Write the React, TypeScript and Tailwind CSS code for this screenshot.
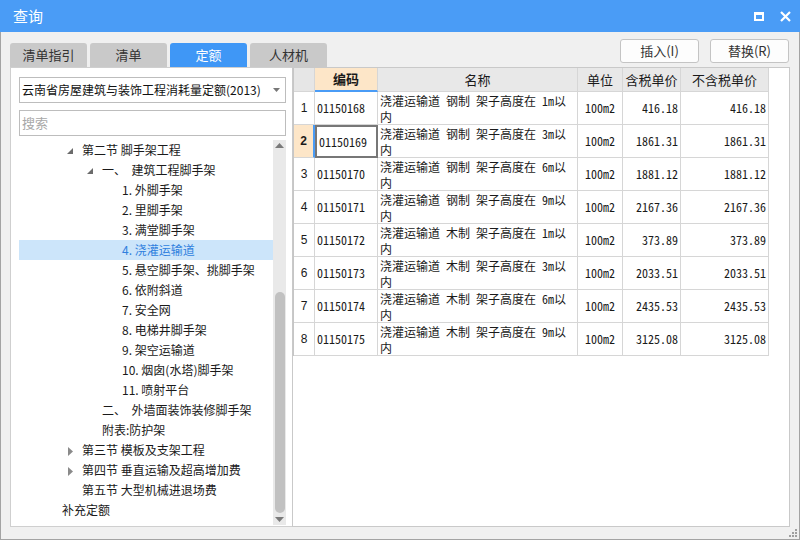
import React from "react";

const rows = [
  ["01150168", "钢制", "1m", "416.18"],
  ["01150169", "钢制", "3m", "1861.31"],
  ["01150170", "钢制", "6m", "1881.12"],
  ["01150171", "钢制", "9m", "2167.36"],
  ["01150172", "木制", "1m", "373.89"],
  ["01150173", "木制", "3m", "2033.51"],
  ["01150174", "木制", "6m", "2435.53"],
  ["01150175", "木制", "9m", "3125.08"],
];

type TreeItem = { text: string; level: number; tri?: "open" | "closed"; sel?: boolean };
const tree: TreeItem[] = [
  { text: "第二节 脚手架工程", level: 1, tri: "open" },
  { text: "一、  建筑工程脚手架", level: 2, tri: "open" },
  { text: "1. 外脚手架", level: 3 },
  { text: "2. 里脚手架", level: 3 },
  { text: "3. 满堂脚手架", level: 3 },
  { text: "4. 浇灌运输道", level: 3, sel: true },
  { text: "5. 悬空脚手架、挑脚手架", level: 3 },
  { text: "6. 依附斜道", level: 3 },
  { text: "7. 安全网", level: 3 },
  { text: "8. 电梯井脚手架", level: 3 },
  { text: "9. 架空运输道", level: 3 },
  { text: "10. 烟囱(水塔)脚手架", level: 3 },
  { text: "11. 喷射平台", level: 3 },
  { text: "二、  外墙面装饰装修脚手架", level: 2 },
  { text: "附表:防护架", level: 2 },
  { text: "第三节 模板及支架工程", level: 1, tri: "closed" },
  { text: "第四节 垂直运输及超高增加费", level: 1, tri: "closed" },
  { text: "第五节 大型机械进退场费", level: 1 },
  { text: "补充定额", level: 0 },
];

const padByLevel = ["pl-[43px]", "pl-[63px]", "pl-[83px]", "pl-[103px]"];

function Tri({ kind }: { kind: "open" | "closed" }) {
  if (kind === "open")
    return (
      <svg width="7" height="7" viewBox="0 0 7 7" className="absolute -left-[15px] top-[7px]">
        <polygon points="6,0 6,6 0,6" fill="#6b6b6b" />
      </svg>
    );
  return (
    <svg width="5" height="9" viewBox="0 0 5 9" className="absolute -left-[14px] top-[6px]">
      <polygon points="0,0 5,4.5 0,9" fill="#8a8a8a" />
    </svg>
  );
}

export default function App() {
  const cell = "border-r border-b border-[#d6d6d6]";
  return (
    <div className="w-[800px] h-[540px] flex flex-col font-['Noto_Sans_CJK_SC',sans-serif] text-[#1a1a1a] overflow-hidden">
      {/* Title bar */}
      <div className="h-[32px] bg-[#4a9cf6] flex items-center justify-between pl-[13px] pr-[9px] shrink-0">
        <span className="text-white text-[15px]">查询</span>
        <div className="flex items-center gap-[16px]">
          <svg width="10" height="9" viewBox="0 0 10 9">
            <rect x="1" y="1" width="8" height="7" fill="none" stroke="#fff" strokeWidth="2" />
            <rect x="0" y="0" width="10" height="3" fill="#fff" />
          </svg>
          <svg width="11" height="11" viewBox="0 0 11 11">
            <path d="M1 1 L10 10 M10 1 L1 10" stroke="#fff" strokeWidth="2.2" />
          </svg>
        </div>
      </div>

      {/* Body */}
      <div className="flex-1 bg-[#f0f0f0] border-x border-b border-[#a3a3a3] px-[9px] flex flex-col relative">
        {/* Top row: tabs + buttons */}
        <div className="h-[35px] flex justify-between shrink-0">
          <div className="flex items-end gap-[3px]">
            {["清单指引", "清单", "定额", "人材机"].map((t) => (
              <div
                key={t}
                className={`w-[77px] h-[24px] rounded-t-[3px] flex items-center justify-center text-[13px] ${
                  t === "定额" ? "bg-[#3f97f6] text-white" : "bg-[#c9c9c9] text-[#333]"
                }`}
              >
                {t}
              </div>
            ))}
          </div>
          <div className="flex gap-[11px] pt-[7px] pr-[1px]">
            {["插入(I)", "替换(R)"].map((t) => (
              <div
                key={t}
                className="w-[79px] h-[24px] bg-[#fdfdfd] border border-[#c4c4c4] rounded-[3px] flex items-center justify-center text-[13px] text-[#333]"
              >
                {t}
              </div>
            ))}
          </div>
        </div>

        {/* Content */}
        <div className="h-[460px] flex shrink-0">
          {/* Left panel */}
          <div className="w-[282px] bg-white border border-r-0 border-[#cfcfcf] flex flex-col pl-[8px] pr-[6px] pt-[9px]">
            <div className="h-[26px] border border-[#bdbdbd] flex items-center justify-between pl-[2px] pr-[5px] shrink-0">
              <span className="text-[12px] text-[#111] whitespace-nowrap">云南省房屋建筑与装饰工程消耗量定额(2013)</span>
              <svg width="7" height="4" viewBox="0 0 7 4">
                <polygon points="0,0 7,0 3.5,4" fill="#777" />
              </svg>
            </div>
            <div className="h-[26px] border border-[#bdbdbd] mt-[7px] flex items-center pl-[2px] shrink-0">
              <span className="text-[13px] text-[#a8a8a8]">搜索</span>
            </div>
            <div className="flex flex-1 mt-[4px] mb-[1px] min-h-0">
              <div className="flex-1 flex flex-col">
                {tree.map((it, i) => (
                  <div
                    key={i}
                    className={`h-[20px] flex items-center text-[12px] whitespace-pre ${padByLevel[it.level]} ${
                      it.sel ? "bg-[#cce5fa] text-[#2f7fde]" : ""
                    }`}
                  >
                    <span className="relative">
                      {it.tri && <Tri kind={it.tri} />}
                      {it.text}
                    </span>
                  </div>
                ))}
              </div>
              {/* Scrollbar */}
              <div className="w-[13px] bg-[#e9e9e9] flex flex-col items-center">
                <svg width="9" height="5" viewBox="0 0 9 5" className="mt-[3px]">
                  <polygon points="0,5 9,5 4.5,0" fill="#7a7a7a" />
                </svg>
                <div className="h-[144px]" />
                <div className="w-[10px] h-[221px] rounded-[5px] bg-[#c1c1c1]" />
                <div className="flex-1" />
                <svg width="9" height="5" viewBox="0 0 9 5" className="mb-[3px]">
                  <polygon points="0,0 9,0 4.5,5" fill="#7a7a7a" />
                </svg>
              </div>
            </div>
          </div>

          {/* Right panel */}
          <div className="flex-1 bg-white border border-[#c9c9c9]">
            <div className="grid grid-cols-[21px_63px_200px_45px_58px_88px] w-[475px] text-[12px] border-l border-[#c6c6c6]">
              {/* Header */}
              <div className={`h-[24px] bg-[#e6e6e6] ${cell}`} />
              <div className={`h-[24px] bg-[#fde6c8] ${cell} border-b-2 border-b-[#4a9cf6] flex items-center justify-center font-bold text-[13px]`}>
                编码
              </div>
              {["名称", "单位", "含税单价", "不含税单价"].map((h) => (
                <div key={h} className={`h-[24px] bg-[#e8e8e8] ${cell} flex items-center justify-center text-[13px]`}>
                  {h}
                </div>
              ))}
              {rows.map((r, i) => {
                const sel = i === 1;
                return (
                  <React.Fragment key={r[0]}>
                    <div
                      className={`h-[33px] ${cell} flex items-center justify-center ${
                        sel ? "bg-[#fde6c8] font-bold border-r-2 border-r-[#4a9cf6]" : ""
                      } font-['Liberation_Sans',sans-serif] text-[12px]`}
                    >
                      {i + 1}
                    </div>
                    <div
                      className={`h-[33px] ${cell} flex items-center pl-[2px] font-['Noto_Sans_Mono_CJK_SC','Liberation_Mono',monospace] ${
                        sel ? "!border-2 !border-[#777]" : ""
                      }`}
                    >
                      {r[0]}
                    </div>
                    <div className={`h-[33px] ${cell} pl-[2px] pt-[1px] leading-[16px] whitespace-pre font-['Noto_Sans_Mono_CJK_SC','Noto_Sans_CJK_SC',monospace]`}>
                      {`浇灌运输道 ${r[1]} 架子高度在 ${r[2]}以`}
                      <br />
                      内
                    </div>
                    <div className={`h-[33px] ${cell} flex items-center justify-center font-['Noto_Sans_Mono_CJK_SC','Liberation_Mono',monospace]`}>
                      100m2
                    </div>
                    <div className={`h-[33px] ${cell} flex items-center justify-end pr-[2px] font-['Noto_Sans_Mono_CJK_SC','Liberation_Mono',monospace]`}>
                      {r[3]}
                    </div>
                    <div className={`h-[33px] ${cell} flex items-center justify-end pr-[2px] font-['Noto_Sans_Mono_CJK_SC','Liberation_Mono',monospace]`}>
                      {r[3]}
                    </div>
                  </React.Fragment>
                );
              })}
            </div>
          </div>
        </div>

        {/* resize grip */}
        <svg width="9" height="9" viewBox="0 0 9 9" className="absolute right-[1px] bottom-[1px]">
          <rect x="6" y="0" width="2" height="2" fill="#a0a0a0" />
          <rect x="3" y="3" width="2" height="2" fill="#a0a0a0" />
          <rect x="6" y="3" width="2" height="2" fill="#a0a0a0" />
          <rect x="0" y="6" width="2" height="2" fill="#a0a0a0" />
          <rect x="3" y="6" width="2" height="2" fill="#a0a0a0" />
          <rect x="6" y="6" width="2" height="2" fill="#a0a0a0" />
        </svg>
      </div>
    </div>
  );
}
